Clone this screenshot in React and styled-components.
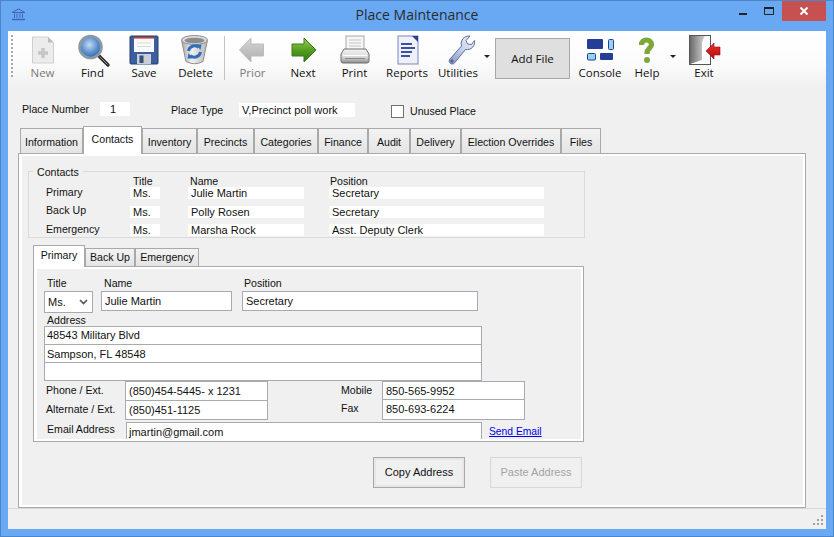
import React from 'react';
import styled, { createGlobalStyle } from 'styled-components';

const GlobalStyle = createGlobalStyle`
  html, body {
    margin: 0;
    padding: 0;
    background: #69a9f3;
  }
  * {
    box-sizing: border-box;
  }
`;

const Window = styled.div`
  width: 834px;
  height: 537px;
  display: flex;
  flex-direction: column;
  background: #69a9f3;
  border: 1px solid #4a86c8;
  padding: 0 7px 7px 7px;
  font-family: "Liberation Sans", Arial, sans-serif;
  font-size: 10.6px;
  color: #111;
  overflow: hidden;
`;

const TitleBar = styled.div`
  height: 29px;
  flex: none;
  margin-bottom: 1px;
  display: grid;
  grid-template-columns: 1fr auto 1fr;
  align-items: start;
`;

const TitleIcon = styled.div`
  padding: 7px 0 0 3px;
  height: 24px;
`;

const Title = styled.div`
  font-family: "Open Sans", sans-serif;
  font-size: 14px;
  line-height: 20px;
  padding-top: 4px;
  color: #2b2b2b;
`;

const WindowButtons = styled.div`
  display: flex;
  justify-content: flex-end;
`;

const WinButton = styled.div`
  width: ${p => p.$w}px;
  height: 20px;
  display: flex;
  align-items: center;
  justify-content: center;
  background: ${p => p.$close ? '#c75050' : 'transparent'};
`;

const Client = styled.div`
  flex: 1;
  display: flex;
  flex-direction: column;
  background: #f0f0f0;
`;

const Toolbar = styled.div`
  height: 57px;
  flex: none;
  display: flex;
  align-items: flex-start;
  padding-left: 3px;
  background: linear-gradient(#ffffff 0%, #fbfbfb 60%, #f0f0f0 100%);
`;

const Grip = styled.div`
  width: 2px;
  height: 42px;
  margin: 4px 5px 0 0;
  background: repeating-linear-gradient(#a8a8a8 0 2px, transparent 2px 4px);
`;

const Tool = styled.div`
  width: ${p => p.$w}px;
  flex: none;
  display: flex;
  flex-direction: column;
  align-items: center;
  padding-top: 3px;
  font-family: "Open Sans", sans-serif;
  font-size: 11.5px;
  color: ${p => p.$disabled ? '#7b7b7b' : '#111'};
`;

const ToolLabel = styled.span`
  line-height: 16px;
  margin-top: -1px;
`;

const ToolSeparator = styled.div`
  width: 1px;
  height: 44px;
  flex: none;
  margin: 5px 3px 0 3px;
  background: #c4c4c4;
`;

const Caret = styled.div`
  width: ${p => p.$w}px;
  flex: none;
  height: 27px;
  display: flex;
  align-items: flex-end;
  justify-content: center;
  &::after {
    content: '';
    border-left: 3px solid transparent;
    border-right: 3px solid transparent;
    border-top: 3px solid #222;
  }
`;

const AddFile = styled.div`
  width: 75px;
  height: 41px;
  flex: none;
  margin: 7px 4px 0 4px;
  display: flex;
  align-items: center;
  justify-content: center;
  background: #dfdfdf;
  border: 1px solid #a8a8a8;
  font-family: "Open Sans", sans-serif;
  font-size: 11.5px;
`;

const PlaceRow = styled.div`
  height: 17px;
  margin-top: 13px;
  padding-left: 14px;
  display: flex;
  align-items: center;
  flex: none;
`;

const PlaceLabel = styled.span`
  width: ${p => p.$w}px;
  flex: none;
  margin-bottom: ${p => p.$mb || 0}px;
`;

const ReadOnly = styled.div`
  width: ${p => p.$w}px;
  height: 14px;
  line-height: 14px;
  flex: none;
  margin-right: ${p => p.$mr}px;
  margin-bottom: ${p => p.$mb || 0}px;
  padding-left: ${p => p.$pl}px;
  background: #fff;
  font-size: 11px;
`;

const CheckBox = styled.div`
  width: 13px;
  height: 13px;
  flex: none;
  margin: 3px 6px 0 0;
  background: #fff;
  border: 1px solid #707070;
`;

const CheckLabel = styled.span`
  margin-top: 2px;
`;

const TabStrip = styled.div`
  display: flex;
  align-items: flex-end;
  flex: none;
  height: ${p => p.$h}px;
  margin: ${p => p.$mt}px 0 0 ${p => p.$ml}px;
`;

const Tab = styled.div`
  width: ${p => p.$w}px;
  flex: none;
  height: ${p => p.$h}px;
  margin-bottom: ${p => p.$active ? -1 : 0}px;
  position: relative;
  z-index: ${p => p.$active ? 2 : 1};
  display: flex;
  justify-content: center;
  padding-top: ${p => p.$pad}px;
  line-height: 12px;
  border: 1px solid #a9a9a9;
  border-bottom: 0;
  background: ${p => p.$active ? '#fff' : 'linear-gradient(#f3f3f3, #e4e4e4)'};
`;

const TabPanel = styled.div`
  flex: none;
  width: ${p => p.$w}px;
  height: ${p => p.$h}px;
  margin-left: ${p => p.$ml}px;
  background: #f0f0f0;
  border: 1px solid #a9a9a9;
  box-shadow: inset 3px 2px 0 #fff, inset -2px -2px 0 #fff;
  padding: ${p => p.$pt}px 0 0 ${p => p.$pl}px;
`;

const Group = styled.div`
  position: relative;
  width: 557px;
  height: 67px;
  margin: 11px 0 0 6px;
  padding: 4px 0 0 17px;
  border: 1px solid #dadada;
`;

const Legend = styled.span`
  position: absolute;
  top: -6px;
  left: 4px;
  padding: 0 4px;
  line-height: 12px;
  background: #f0f0f0;
`;

const ContactGrid = styled.div`
  display: grid;
  grid-template-columns: 84px 58px 141px 215px;
  grid-template-rows: 11px 19px 18px 12px;
`;

const ColumnHead = styled.span`
  line-height: 11px;
  padding-left: ${p => p.$pl}px;
`;

const RowLabel = styled.span`
  line-height: 9px;
  padding-top: ${p => p.$pt}px;
`;

const Cell = styled.div`
  width: ${p => p.$w}px;
  height: 12px;
  padding-left: 3px;
  line-height: 13px;
  background: #fff;
  overflow: hidden;
  white-space: nowrap;
  font-size: 11px;
`;

const InnerTabs = styled.div`
  margin-left: 11px;
`;

const FieldColumns = styled.div`
  display: flex;
  padding: 8px 0 0 7px;
`;

const FieldStack = styled.div`
  width: ${p => p.$w}px;
  margin-right: ${p => p.$mr}px;
  flex: none;
`;

const FieldLabel = styled.div`
  line-height: 12px;
  padding-left: ${p => p.$pl}px;
  margin-bottom: 2px;
`;

const Input = styled.div`
  height: ${p => p.$h || 20}px;
  padding-left: 3px;
  line-height: 18px;
  background: #fff;
  border: 1px solid #a9a9b0;
  font-size: 11px;
`;

const Combo = styled(Input)`
  display: flex;
  justify-content: space-between;
  align-items: center;
  padding-right: 4px;
`;

const AddressLabel = styled(FieldLabel)`
  margin: 1px 0 0 7px;
  padding-left: 3px;
  height: 12px;
`;

const AddressBox = styled.div`
  width: 438px;
  margin-left: 7px;
  background: #fff;
  border: 1px solid #a9a9b0;
  font-size: 11px;
`;

const AddressLine = styled.div`
  height: ${p => p.$first ? 17 : 18}px;
  padding-left: 2px;
  line-height: ${p => p.$first ? 17 : 18}px;
  border-top: ${p => p.$first ? 'none' : '1px solid #a9a9b0'};
`;

const PhoneRow = styled.div`
  display: flex;
  padding-left: 9px;
`;

const PhoneLabels = styled.div`
  width: ${p => p.$w}px;
  flex: none;
  padding-top: 3px;
  display: flex;
  flex-direction: column;
  gap: ${p => p.$gap}px;
  line-height: 12px;
`;

const PhoneBox = styled.div`
  width: 143px;
  flex: none;
  margin-right: ${p => p.$mr}px;
  background: #fff;
  border: 1px solid #a9a9b0;
  font-size: 11px;
`;

const PhoneLine = styled.div`
  height: ${p => p.$h}px;
  padding-left: 3px;
  line-height: 18px;
  border-top: ${p => p.$first ? 'none' : '1px solid #a9a9b0'};
`;

const EmailRow = styled.div`
  display: flex;
  margin: ${p => p.$mt}px 0 0 10px;
  height: 17px;
`;

const EmailLabel = styled.span`
  width: 79px;
  flex: none;
  line-height: 14px;
`;

const EmailBox = styled.div`
  width: 356px;
  flex: none;
  height: 17px;
  padding-left: 2px;
  line-height: 19px;
  background: #fff;
  border: 1px solid #a9a9b0;
  border-bottom: none;
  font-size: 11px;
`;

const SendLink = styled.a`
  margin-left: 7px;
  line-height: 19px;
  font-size: 10.3px;
  color: #0000ee;
  text-decoration: underline;
`;

const ButtonRow = styled.div`
  display: flex;
  gap: 25px;
  margin: 15px 0 0 351px;
`;

const Button = styled.div`
  width: 92px;
  height: 31px;
  padding-bottom: 1px;
  display: flex;
  align-items: center;
  justify-content: center;
  font-size: 11px;
  border: 1px solid ${p => p.$disabled ? '#d8d8d8' : '#a9a9a9'};
  box-shadow: inset 0 0 0 2px ${p => p.$disabled ? '#efefef' : '#e6e6e6'};
  background: #f0f0f0;
  color: ${p => p.$disabled ? '#a3a3a3' : '#111'};
`;

const StatusBar = styled.div`
  flex: 1;
  display: flex;
  justify-content: flex-end;
  align-items: flex-end;
  border-top: 1px solid #d9d9d9;
  padding: 0 2px 2px 0;
`;

const Svg = ({ children }) => (
  <svg width="34" height="32" viewBox="0 0 34 32" style={{ overflow: 'visible', display: 'block' }}>{children}</svg>
);

const NewIcon = () => (
  <Svg>
    <path d="M6.5 3H22L27.5 8.5V29H6.5Z" fill="#ececec" stroke="#cfcfcf" />
    <path d="M22 3V8.5H27.5Z" fill="#bdbdbd" />
    <path d="M17 14V24M12 19H22" stroke="#c6c6c6" strokeWidth="3.4" />
  </Svg>
);

const FindIcon = () => (
  <Svg>
    <defs>
      <radialGradient id="lens" cx="0.45" cy="0.4" r="0.7">
        <stop offset="0" stopColor="#c4dcf4" />
        <stop offset="0.6" stopColor="#4f86c8" />
        <stop offset="1" stopColor="#2d5a9c" />
      </radialGradient>
    </defs>
    <path d="M23 22L32 31" stroke="#2a2a2a" strokeWidth="3.4" strokeLinecap="round" />
    <path d="M23.5 22.5L31.5 30.5" stroke="#9a9a9a" strokeWidth="1" />
    <circle cx="14.5" cy="13" r="11" fill="url(#lens)" stroke="#8d9aa3" strokeWidth="2.6" />
  </Svg>
);

const SaveIcon = () => (
  <Svg>
    <rect x="3" y="2" width="28" height="28" rx="1" fill="#3b5f9e" stroke="#243f70" />
    <rect x="7" y="3" width="20" height="15" fill="#fbfbfb" />
    <rect x="7" y="3" width="20" height="1.6" fill="#d8372b" />
    <path d="M10 9H24M10 12.5H24" stroke="#d7d7d7" />
    <rect x="10" y="20" width="14" height="10" fill="#c9ced6" />
    <rect x="12.5" y="21.5" width="4" height="7.5" fill="#3a4f78" />
  </Svg>
);

const DeleteIcon = () => (
  <Svg>
    <defs>
      <linearGradient id="bin" x1="0" x2="1" y1="0" y2="0">
        <stop offset="0" stopColor="#a8a8a8" />
        <stop offset="0.4" stopColor="#f1f1f1" />
        <stop offset="1" stopColor="#b4b4b4" />
      </linearGradient>
    </defs>
    <path d="M2.5 6L7 27.5Q15.5 32 24 27.5L28.5 6Z" fill="url(#bin)" stroke="#8f8f8f" />
    <ellipse cx="15.5" cy="6" rx="13" ry="4.5" fill="#dcdcdc" stroke="#8f8f8f" />
    <ellipse cx="15.5" cy="6.5" rx="10" ry="2.8" fill="#8b8b8b" />
    <path d="M9.5 17A6 6 0 0 1 19.5 13.5" fill="none" stroke="#2e6fb8" strokeWidth="3" />
    <path d="M17 10.5L22.5 10.5L21.5 16Z" fill="#2e6fb8" />
    <path d="M21.5 18A6 6 0 0 1 11.5 21.5" fill="none" stroke="#2e6fb8" strokeWidth="3" />
    <path d="M14 24.5L8.5 24.5L9.5 19Z" fill="#2e6fb8" />
  </Svg>
);

const PriorIcon = () => (
  <Svg>
    <defs>
      <linearGradient id="grayArrow" x1="0" x2="0" y1="0" y2="1">
        <stop offset="0" stopColor="#d6d6d6" />
        <stop offset="1" stopColor="#adadad" />
      </linearGradient>
    </defs>
    <path d="M3.5 16L15 4V10H27.5V22H15V28Z" fill="url(#grayArrow)" stroke="#bdbdbd" />
  </Svg>
);

const NextIcon = () => (
  <Svg>
    <defs>
      <linearGradient id="greenArrow" x1="0" x2="0" y1="0" y2="1">
        <stop offset="0" stopColor="#9bd04a" />
        <stop offset="0.55" stopColor="#4f9a1e" />
        <stop offset="1" stopColor="#2f7a12" />
      </linearGradient>
    </defs>
    <path d="M6 10H18V4L30 16L18 28V22H6Z" fill="url(#greenArrow)" stroke="#3c7a18" />
  </Svg>
);

const PrintIcon = () => (
  <Svg>
    <defs>
      <linearGradient id="printer" x1="0" x2="0" y1="0" y2="1">
        <stop offset="0" stopColor="#f4f4f4" />
        <stop offset="0.6" stopColor="#d4d4d4" />
        <stop offset="1" stopColor="#8c8c8c" />
      </linearGradient>
    </defs>
    <rect x="8" y="2" width="18" height="15" fill="#f6f6f6" stroke="#a8a8a8" />
    <path d="M11 6H23M11 9H23M11 12H23" stroke="#c6c6c6" />
    <path d="M6 15H28L31 20V27Q31 29 29 29H5Q3 29 3 27V20Z" fill="url(#printer)" stroke="#6e6e6e" />
    <path d="M5 21.5H29" stroke="#fff" strokeWidth="1.2" />
    <path d="M7 24.5H27" stroke="#8a8a8a" />
  </Svg>
);

const ReportsIcon = () => (
  <Svg>
    <rect x="8" y="2" width="20" height="28" fill="#eef1fa" stroke="#7a86c0" />
    <path d="M22 2H28V8Z" fill="#2b3f8f" />
    <path d="M11 10H22M11 14H25M11 18H22M11 22H20" stroke="#3b519f" strokeWidth="1.8" />
  </Svg>
);

const UtilitiesIcon = () => (
  <Svg>
    <defs>
      <linearGradient id="wrench" x1="0" x2="1" y1="1" y2="0">
        <stop offset="0" stopColor="#7d8fc0" />
        <stop offset="0.5" stopColor="#c4d0ea" />
        <stop offset="1" stopColor="#f2f4fa" />
      </linearGradient>
    </defs>
    <path d="M8.5 25.5L20.5 12C19 6.5 23 1.5 29 2L25 6.5L26.5 10L30.5 10.5L33.5 6.5C34.5 12 30 16.5 24.5 15.5L13 29.5C11 31 7 29 8.5 25.5Z" fill="url(#wrench)" stroke="#5f6f9f" />
    <circle cx="11" cy="27" r="1.4" fill="#4d5c88" />
  </Svg>
);

const ConsoleIcon = () => (
  <Svg>
    <rect x="4" y="5" width="16" height="10" rx="1" fill="#253d96" />
    <rect x="25.5" y="5.5" width="5" height="10" rx="1" fill="#93d3ef" stroke="#253d96" />
    <rect x="4.5" y="19.5" width="8" height="6.5" rx="1" fill="#93d3ef" stroke="#253d96" />
    <rect x="17" y="19" width="13" height="7" rx="1" fill="#253d96" />
  </Svg>
);

const HelpIcon = () => (
  <Svg>
    <path d="M11.5 11C11.5 7 14 6 16.5 6C19.5 6 21.5 8 21.5 10.5C21.5 14 17 14.5 17 19V20" fill="none" stroke="#7ca83a" strokeWidth="5.2" />
    <circle cx="17" cy="26" r="3" fill="#7ca83a" />
  </Svg>
);

const ExitIcon = () => (
  <Svg>
    <defs>
      <linearGradient id="door" x1="0" x2="1" y1="0" y2="0">
        <stop offset="0" stopColor="#6a6a6a" />
        <stop offset="1" stopColor="#d4d4d4" />
      </linearGradient>
      <linearGradient id="redArrow" x1="0" x2="0" y1="0" y2="1">
        <stop offset="0" stopColor="#ee3030" />
        <stop offset="1" stopColor="#b00c0c" />
      </linearGradient>
    </defs>
    <rect x="2.5" y="1.5" width="21" height="29" fill="#fff" stroke="#555" />
    <path d="M3 2H18L15 8V26L3 30Z" fill="url(#door)" />
    <path d="M9.5 13L12 16L9.5 19" fill="none" stroke="#a8a8a8" />
    <path d="M19 17L27 9V13H33V21H27V25Z" fill="url(#redArrow)" stroke="#a00c0c" strokeWidth="0.6" />
  </Svg>
);

const BankIcon = () => (
  <svg width="15" height="13" viewBox="0 0 15 13" style={{ display: 'block' }}>
    <path d="M1 4.5L7.5 1L14 4.5Z" fill="none" stroke="#3f63b8" />
    <path d="M3.5 5.5V10M6 5.5V10M9 5.5V10M11.5 5.5V10" stroke="#3f63b8" />
    <path d="M1 11.5H14" stroke="#3f63b8" strokeWidth="1.4" />
  </svg>
);

const leftTools = [
  { label: 'New', w: 49, Icon: NewIcon, disabled: true },
  { label: 'Find', w: 51, Icon: FindIcon },
  { label: 'Save', w: 52, Icon: SaveIcon },
  { label: 'Delete', w: 51, Icon: DeleteIcon },
];

const midTools = [
  { label: 'Prior', w: 49, Icon: PriorIcon, disabled: true },
  { label: 'Next', w: 52, Icon: NextIcon },
  { label: 'Print', w: 51, Icon: PrintIcon },
  { label: 'Reports', w: 54, Icon: ReportsIcon },
  { label: 'Utilities', w: 48, Icon: UtilitiesIcon },
];

const mainTabs = [
  { label: 'Information', w: 63 },
  { label: 'Contacts', w: 59, active: true },
  { label: 'Inventory', w: 55 },
  { label: 'Precincts', w: 57 },
  { label: 'Categories', w: 64 },
  { label: 'Finance', w: 50 },
  { label: 'Audit', w: 42 },
  { label: 'Delivery', w: 51 },
  { label: 'Election Overrides', w: 100 },
  { label: 'Files', w: 40 },
];

const contactTabs = [
  { label: 'Primary', w: 52, active: true },
  { label: 'Back Up', w: 50 },
  { label: 'Emergency', w: 64 },
];

const contacts = [
  { role: 'Primary', name: 'Julie Martin', position: 'Secretary', pt: 1 },
  { role: 'Back Up', name: 'Polly Rosen', position: 'Secretary', pt: 0 },
  { role: 'Emergency', name: 'Marsha Rock', position: 'Asst. Deputy Clerk', pt: 1 },
];

const ToolButton = ({ tool }) => (
  <Tool $w={tool.w} $disabled={tool.disabled}>
    <tool.Icon />
    <ToolLabel>{tool.label}</ToolLabel>
  </Tool>
);

function App() {
  return (
    <>
      <GlobalStyle />
      <Window>
        <TitleBar>
          <TitleIcon><BankIcon /></TitleIcon>
          <Title>Place Maintenance</Title>
          <WindowButtons>
            <WinButton $w={27}>
              <svg width="10" height="10" viewBox="0 0 10 10"><rect x="1" y="7" width="8" height="2" fill="#222" /></svg>
            </WinButton>
            <WinButton $w={26}>
              <svg width="10" height="10" viewBox="0 0 10 10"><path d="M0.5 1.5H9.5V8.5H0.5Z" fill="none" stroke="#222" /><rect x="0" y="1" width="10" height="2" fill="#222" /></svg>
            </WinButton>
            <WinButton $w={44} $close>
              <svg width="10" height="10" viewBox="0 0 10 10"><path d="M1.5 1.5L8.5 8.5M8.5 1.5L1.5 8.5" stroke="#fff" strokeWidth="2" /></svg>
            </WinButton>
          </WindowButtons>
        </TitleBar>
        <Client>
          <Toolbar>
            <Grip />
            {leftTools.map(t => <ToolButton key={t.label} tool={t} />)}
            <ToolSeparator />
            {midTools.map(t => <ToolButton key={t.label} tool={t} />)}
            <Caret $w={9} />
            <AddFile>Add File</AddFile>
            <ToolButton tool={{ label: 'Console', w: 52, Icon: ConsoleIcon }} />
            <ToolButton tool={{ label: 'Help', w: 42, Icon: HelpIcon }} />
            <Caret $w={10} />
            <ToolButton tool={{ label: 'Exit', w: 52, Icon: ExitIcon }} />
          </Toolbar>

          <PlaceRow>
            <PlaceLabel $w={78} $mb={2}>Place Number</PlaceLabel>
            <ReadOnly $w={30} $mr={41} $pl={10} $mb={2}>1</ReadOnly>
            <PlaceLabel $w={68}>Place Type</PlaceLabel>
            <ReadOnly $w={116} $mr={36} $pl={3}>V,Precinct poll work</ReadOnly>
            <CheckBox />
            <CheckLabel>Unused Place</CheckLabel>
          </PlaceRow>

          <TabStrip $h={25} $mt={10} $ml={12}>
            {mainTabs.map(t => (
              <Tab key={t.label} $w={t.w} $h={t.active ? 28 : 25} $pad={t.active ? 6 : 7} $active={t.active}>{t.label}</Tab>
            ))}
          </TabStrip>
          <TabPanel $w={788} $h={355} $ml={10} $pt={6} $pl={3}>
            <Group>
              <Legend>Contacts</Legend>
              <ContactGrid>
                <span />
                <ColumnHead $pl={3}>Title</ColumnHead>
                <ColumnHead $pl={2}>Name</ColumnHead>
                <ColumnHead $pl={1}>Position</ColumnHead>
                {contacts.map(c => (
                  <React.Fragment key={c.role}>
                    <RowLabel $pt={c.pt}>{c.role}</RowLabel>
                    <Cell $w={30}>Ms.</Cell>
                    <Cell $w={116}>{c.name}</Cell>
                    <Cell $w={215}>{c.position}</Cell>
                  </React.Fragment>
                ))}
              </ContactGrid>
            </Group>

            <InnerTabs>
              <TabStrip $h={18} $mt={10} $ml={0}>
                {contactTabs.map(t => (
                  <Tab key={t.label} $w={t.w} $h={t.active ? 22 : 18} $pad={t.active ? 3 : 2} $active={t.active}>{t.label}</Tab>
                ))}
              </TabStrip>
              <TabPanel $w={551} $h={176} $ml={0} $pt={2} $pl={3}>
                <FieldColumns>
                  <FieldStack $w={49} $mr={8}>
                    <FieldLabel $pl={3}>Title</FieldLabel>
                    <Combo $h={22}>
                      Ms.
                      <svg width="9" height="6" viewBox="0 0 9 6"><path d="M1 1L4.5 4.5L8 1" fill="none" stroke="#555" strokeWidth="1.6" /></svg>
                    </Combo>
                  </FieldStack>
                  <FieldStack $w={131} $mr={10}>
                    <FieldLabel $pl={3}>Name</FieldLabel>
                    <Input>Julie Martin</Input>
                  </FieldStack>
                  <FieldStack $w={236} $mr={0}>
                    <FieldLabel $pl={2}>Position</FieldLabel>
                    <Input>Secretary</Input>
                  </FieldStack>
                </FieldColumns>

                <AddressLabel>Address</AddressLabel>
                <AddressBox>
                  <AddressLine $first>48543 Military Blvd</AddressLine>
                  <AddressLine>Sampson, FL 48548</AddressLine>
                  <AddressLine />
                </AddressBox>

                <PhoneRow>
                  <PhoneLabels $w={79} $gap={7}>
                    <span>Phone / Ext.</span>
                    <span>Alternate / Ext.</span>
                  </PhoneLabels>
                  <PhoneBox $mr={73}>
                    <PhoneLine $first $h={18}>(850)454-5445- x 1231</PhoneLine>
                    <PhoneLine $h={19}>(850)451-1125</PhoneLine>
                  </PhoneBox>
                  <PhoneLabels $w={41} $gap={6}>
                    <span>Mobile</span>
                    <span>Fax</span>
                  </PhoneLabels>
                  <PhoneBox $mr={0}>
                    <PhoneLine $first $h={17}>850-565-9952</PhoneLine>
                    <PhoneLine $h={19}>850-693-6224</PhoneLine>
                  </PhoneBox>
                </PhoneRow>

                <EmailRow $mt={2}>
                  <EmailLabel>Email Address</EmailLabel>
                  <EmailBox>jmartin@gmail.com</EmailBox>
                  <SendLink href="#">Send Email</SendLink>
                </EmailRow>
              </TabPanel>
            </InnerTabs>

            <ButtonRow>
              <Button>Copy Address</Button>
              <Button $disabled>Paste Address</Button>
            </ButtonRow>
          </TabPanel>

          <StatusBar>
            <svg width="12" height="12" viewBox="0 0 12 12">
              <path d="M9 0h2v2H9zM5 4h2v2H5zM9 4h2v2H9zM1 8h2v2H1zM5 8h2v2H5zM9 8h2v2H9z" fill="#a0a0a0" />
            </svg>
          </StatusBar>
        </Client>
      </Window>
    </>
  );
}

export default App;
